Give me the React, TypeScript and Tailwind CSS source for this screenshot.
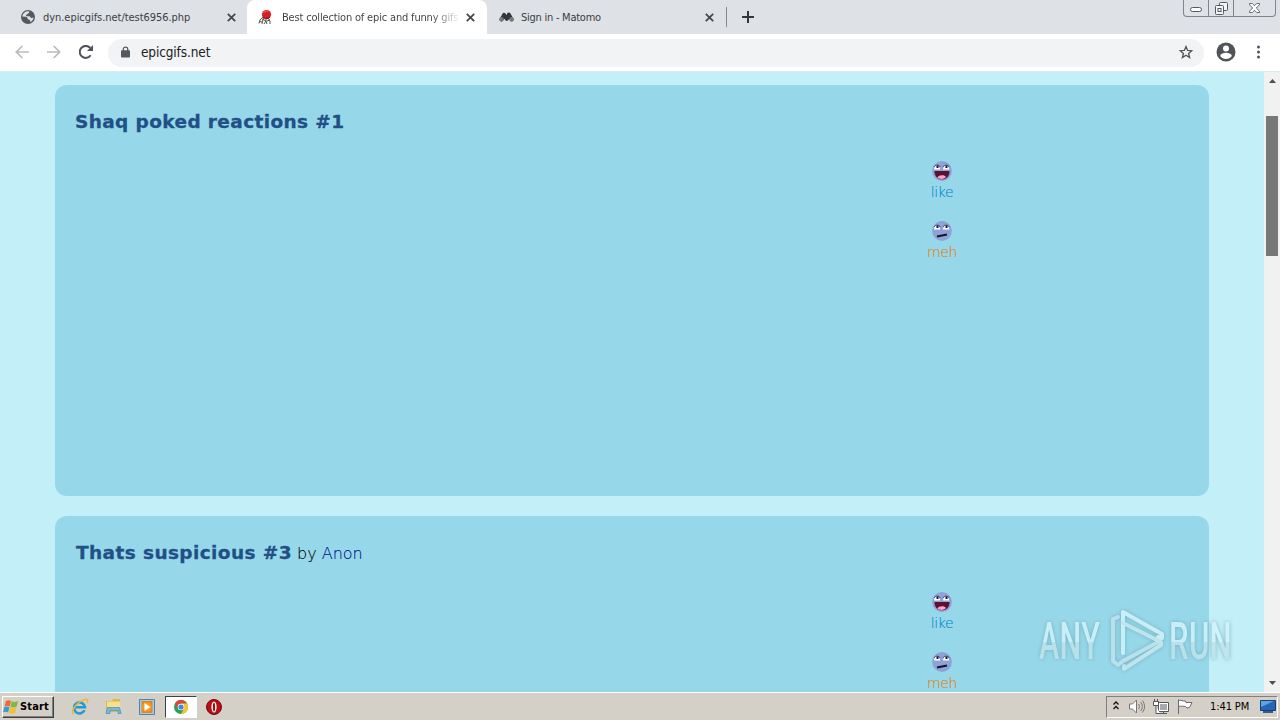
import React from "react";

const ui = "font-['DejaVu_Sans_Condensed','DejaVu_Sans',sans-serif]";

function Close() {
  return (
    <svg className="h-[9px] w-[9px] shrink-0" viewBox="0 0 9 9" stroke="#45494d" strokeWidth="1.8">
      <path d="M.8 .8 8.2 8.2M8.2 .8.8 8.2" />
    </svg>
  );
}

function Globe() {
  return (
    <svg className="h-[14px] w-[14px]" viewBox="0 0 14 14">
      <circle cx="7" cy="7" r="7" fill="#55595e" />
      <path d="M7.8 1.3c1 .7.4 1.7-.6 2-1 .4-.5 1.400-1.700 1.500-.8.2-.6 1.400.5 1.400h2.300c1.300.1 1 1.600 2.100 1.700.9.1 1.500-.3 2.200-.3-.2 2-1.500 3.700-3.200 4.500-.3-1-.1-1.800-1-2.300-1-.5-1.900-.4-2-1.700-.2-1.300-1.300-1.500-2.200-1.400L1.300 6.400C1.600 3.500 4.500.8 7.800 1.300z" fill="#dee1e6" />
    </svg>
  );
}

function GifFavicon() {
  return (
    <svg className="h-4 w-4" viewBox="0 0 16 16" fill="none">
      <path d="M5 8 2 11 1 14.500M6 9 4.500 12 4 15M8 10v2l1 3M10 9l2 3v3M4 10l4 2-2 3M1.500 12.500 4 13M9 12l3-1" stroke="#4f5a4c" strokeWidth="1" />
      <circle cx="8.500" cy="5.500" r="4.600" fill="#d81f26" />
      <path d="M5.500 4c1-2 3-2.300 4.500-1.500" stroke="#f26a6a" />
      <path d="M5 8c2 2 5 2 7 .2" stroke="#8b1218" />
    </svg>
  );
}

function MatomoIcon() {
  return (
    <svg className="h-[10px] w-[15px]" viewBox="0 0 15 10">
      <path d="M2.500 7.500 5 2.800 7.800 7 9.800 2.500l2.900 5" fill="none" stroke="#33373b" strokeWidth="3.800" strokeLinecap="round" strokeLinejoin="round" />
      <circle cx="2.500" cy="7.300" r="2.200" fill="#777b80" />
      <circle cx="12.500" cy="7.300" r="2.200" fill="#777b80" />
    </svg>
  );
}

function TabStrip() {
  return (
    <header className="flex h-[34px] bg-[#dee1e6] text-[11px] text-[#3c4043]">
      <div className="flex w-[247px] items-center rounded-br-lg pr-[11px] pl-[21px]">
        <Globe />
        <span className="mt-[2px] ml-2 w-[184px] whitespace-nowrap tracking-[-0.05px]">dyn.epicgifs.net/test6956.php</span>
        <Close />
      </div>
      <div className="flex w-[240px] items-center rounded-t-lg bg-white pl-[11px]">
        <GifFavicon />
        <span className="mt-[2px] ml-2 w-[176px] overflow-hidden whitespace-nowrap bg-gradient-to-r from-[#3c4043] from-85% to-[#3c4043]/10 bg-clip-text tracking-[-0.17px] text-transparent">Best collection of epic and funny gifs</span>
        <span className="ml-2 flex"><Close /></span>
      </div>
      <div className="flex w-[239px] items-center rounded-bl-lg pl-3">
        <MatomoIcon />
        <span className="mt-[2px] ml-[7px] w-[184px] whitespace-nowrap tracking-[-0.25px]">Sign in - Matomo</span>
        <Close />
      </div>
      <div className="mt-[7px] h-5 w-px bg-[#85898e]" />
      <svg className="mt-[11px] ml-[15px] h-3 w-3" viewBox="0 0 12 12" stroke="#33373b" strokeWidth="2">
        <path d="M0 6h12M6 0v12" />
      </svg>
      <div className="mr-[4px] ml-auto flex h-[17px] w-[93px] rounded-b border border-t-0 border-[#81858c]">
        <div className="flex w-[25px] items-center justify-center border-r border-[#81858c]">
          <span className="mt-[3px] h-[5px] w-3 rounded-sm border border-[#555961] bg-white" />
        </div>
        <div className="flex w-[25px] items-center justify-center border-r border-[#81858c]">
          <svg className="h-[13px] w-[13px]" viewBox="0 0 13 13" fill="#f4f5f7" stroke="#555961">
            <rect x="4.500" y=".5" width="8" height="8" rx="1" />
            <rect x=".5" y="3.500" width="8" height="9" rx="1" />
            <rect x="3" y="6.500" width="3" height="3" />
          </svg>
        </div>
        <div className="flex grow items-center justify-center">
          <svg className="h-[10px] w-[11px]" viewBox="0 0 12 11" fill="#fff" stroke="#555961">
            <path d="M.5.5h3L6 3 8.500.5h3v1.500L8 5.500l3.500 3.500v1.500h-3L6 8l-2.500 2.500h-3V9L4 5.500.5 2z" />
          </svg>
        </div>
      </div>
    </header>
  );
}

function Toolbar() {
  return (
    <div className="flex h-[38px] items-center border-b border-[#dcebee] bg-white">
      <svg className="mb-px ml-[15px] h-[14px] w-[14px]" viewBox="0 0 14 14" fill="none" stroke="#b8babd" strokeWidth="1.700">
        <path d="M14 7H1.500M7.300 1 1.300 7l6 6" />
      </svg>
      <svg className="mb-px ml-[18px] h-[14px] w-[14px]" viewBox="0 0 14 14" fill="none" stroke="#b8babd" strokeWidth="1.700">
        <path d="M0 7h12.500M6.700 1l6 6-6 6" />
      </svg>
      <svg className="mb-px ml-[18px] h-[14px] w-[14px]" viewBox="0 0 14 14">
        <path d="M11.700 10.300A6 6 0 1 1 11.300 3" fill="none" stroke="#505357" strokeWidth="2" />
        <path d="M14 0v6H8z" fill="#505357" />
      </svg>
      <div className="ml-[15px] flex h-7 w-[1096px] items-center rounded-full bg-[#f1f3f4] pr-[11px] pl-[13px]">
        <svg className="mb-[2px] h-3 w-[9px]" viewBox="0 0 10 12">
          <rect x="0" y="4" width="10" height="8" rx="1" fill="#55585c" />
          <path d="M2.500 5V3a2.500 2.300 0 0 1 5 0v2" fill="none" stroke="#55585c" strokeWidth="1.400" />
        </svg>
        <span className="ml-[11px] text-[13.500px] tracking-[-0.12px] text-[#202124]">epicgifs.net</span>
        <svg className="mb-px ml-auto h-[14px] w-[14px]" viewBox="0 0 14 14" fill="none" stroke="#505357" strokeWidth="1.300">
          <path d="m7 1.500 1.600 3.900 4.200.3-3.200 2.700 1 4.100L7 10.300l-3.600 2.200 1-4.100-3.200-2.700 4.200-.3z" />
        </svg>
      </div>
      <svg className="mb-[2px] ml-3 h-5 w-5" viewBox="0 0 20 20">
        <circle cx="10" cy="10" r="9.500" fill="#505357" />
        <circle cx="10" cy="6.500" r="3" fill="#fff" />
        <path d="M4.200 14c0-2.300 3.800-3.200 5.800-3.200s5.800.9 5.800 3.200c-1.200 1.800-3.300 3-5.800 3s-4.600-1.200-5.800-3z" fill="#fff" />
      </svg>
      <svg className="mb-px ml-[21px] h-[14px] w-[3px]" viewBox="0 0 3 14" fill="#505357">
        <circle cx="1.500" cy="2" r="1.500" />
        <circle cx="1.500" cy="7" r="1.500" />
        <circle cx="1.500" cy="12" r="1.500" />
      </svg>
    </div>
  );
}

function Face({ happy }: { happy: boolean }) {
  return (
    <svg className="h-5 w-5 shrink-0" viewBox="0 0 20 20">
      <circle cx="10" cy="10" r="9.900" fill="#8fa2d8" />
      {happy ? (
        <>
          <path d="M2.500 10h15c.3 5-3 8.300-7.500 8.300S2.200 15 2.500 10z" fill="#5b1230" />
          <path d="M5.500 16.500c1-2.500 7-3 8.500-.5-1.800 2.200-6.200 2.700-8.500.5z" fill="#f7a6c8" />
        </>
      ) : (
        <path d="m5 15.500 10-2" stroke="#12142c" strokeWidth="1.900" />
      )}
      <path d="M2 8.500c0-5 5-5.500 6.300 0zM11 8.500c.2-5.500 6-5 6.300 0z" fill="#fff" />
      <path d="M2 6c1.300-2.500 5-2.500 6.300 0M11 6c1.300-2.500 5-2.500 6.300 0" fill="none" stroke="#353b62" strokeWidth=".8" />
      <path d="M4.500 4.500h2v2.500h-2zM13.500 4.500h2v2.500h-2z" fill="#14172d" />
    </svg>
  );
}

function Votes() {
  return (
    <div className="ml-[842px] flex w-[50px] flex-col items-center gap-[21px] text-[14px] leading-[19px]">
      <div className="flex h-[39px] flex-col items-center text-[#0080cf]">
        <Face happy />
        <span className="mt-[2px] font-['DejaVu_Sans_Light','DejaVu_Sans',sans-serif] tracking-[-0.35px] [-webkit-text-stroke:0.1px]">like</span>
      </div>
      <div className="flex h-[39px] flex-col items-center text-[#e87900]">
        <Face happy={false} />
        <span className="mt-[2px] font-['DejaVu_Sans_Light','DejaVu_Sans',sans-serif] tracking-[-0.35px] [-webkit-text-stroke:0.1px]">meh</span>
      </div>
    </div>
  );
}

function Post({ title, author }: { title: string; author?: string }) {
  return (
    <article className="h-[411px] shrink-0 rounded-xl bg-[#96d8e9] px-5 pt-[23px]">
      <h2 className="h-[53px] whitespace-nowrap font-['DejaVu_Sans',sans-serif] leading-7">
        <span className={`text-[18.500px] font-bold text-[#224f85] [-webkit-text-stroke:0.3px] ${author ? "ml-px tracking-[0.4px]" : "tracking-[0.38px]"}`}>{title}</span>
        {author && (
          <span className="ml-[5px] font-['DejaVu_Sans_Light','DejaVu_Sans',sans-serif] text-[16px] text-black [-webkit-text-stroke:0.1px]">
            by <span className="text-[#00108a]">{author}</span>
          </span>
        )}
      </h2>
      <Votes />
    </article>
  );
}

function Scrollbar() {
  return (
    <div className="flex w-4 flex-col items-center bg-[#f1f1f1]">
      <svg className="mt-[7px] h-1 w-[7px]" viewBox="0 0 7 4"><path d="M0 4 3.500 0 7 4z" fill="#505050" /></svg>
      <div className="mt-[33px] h-[140px] w-3 bg-[#777]" />
      <svg className="mt-auto mb-[7px] h-1 w-[7px]" viewBox="0 0 7 4"><path d="M0 0h7L3.500 4z" fill="#505050" /></svg>
    </div>
  );
}

function Watermark() {
  return (
    <div className="absolute top-[608px] left-[1039px] flex h-[66px] w-[196px] items-center opacity-85 drop-shadow-[0_0_2px_#6fa9bb]">
      <div className="w-[64px]">
        <span className="mt-[2px] inline-block origin-left scale-x-[0.6] bg-gradient-to-b from-[#d3f3fb] from-50% to-[#c0e3ed] to-50% bg-clip-text font-['Roboto','Liberation_Sans',sans-serif] text-[51px] leading-[64px] font-medium tracking-[0.5px] text-transparent">ANY</span>
      </div>
      <svg className="ml-[6px] h-[64px] w-[56px] shrink-0" viewBox="0 0 56 64" fill="none" strokeWidth="4" strokeLinejoin="round" strokeLinecap="round">
        <path d="M9 8 4 10v42l5 4 5-4 37-20" stroke="#c0e3ed" />
        <path d="M14 44V3l39 22v4l-4-1" stroke="#d3f3fb" />
        <path d="M14 14 52 33v3L15 60v-3" stroke="#c6e7f0" />
      </svg>
      <div className="ml-[4px] w-[66px]">
        <span className="mt-[2px] inline-block origin-left scale-x-[0.61] bg-gradient-to-b from-[#d3f3fb] from-50% to-[#c0e3ed] to-50% bg-clip-text font-['Roboto','Liberation_Sans',sans-serif] text-[51px] leading-[64px] font-medium tracking-[0.5px] text-transparent">RUN</span>
      </div>
    </div>
  );
}

function StartFlag() {
  return (
    <svg className="h-4 w-4 shrink-0" viewBox="0 0 16 16">
      <path d="M3 2c2-1.300 3.500-1 5 0L6.700 7.500c-1.700-1-3.300-1.100-5.200 0z" fill="#ee6a35" />
      <path d="M8.700 2.300c2 1 3.800 1 6.500-.2l-1.500 5.500c-2 1.100-4.500 1.200-6.200.2z" fill="#80b840" />
      <path d="M1.300 8.200c2-1 3.500-1 5.200 0L5 13.500C3.500 12.600 2 12.500 0 13.600z" fill="#3998d5" />
      <path d="M7.200 8.500c1.800 1 3.600 1 6.300 0L12 14c-2 1-4.400.8-6.300-.1z" fill="#f4bf30" />
    </svg>
  );
}

function Taskbar() {
  return (
    <footer className="flex h-7 items-center border-t border-white bg-[#d4d0c8] text-[11px] text-black">
      <button className="ml-[2px] flex h-[22px] w-[52px] items-center border border-t-white border-r-[#404040] border-b-[#404040] border-l-white text-[11px] font-bold shadow-[inset_-1px_-1px_#808080]">
        <StartFlag />
        <span className="mt-px ml-px tracking-[0.150px]">Start</span>
      </button>
      <svg className="ml-[17px] h-[18px] w-[18px]" viewBox="0 0 18 18" fill="none">
        <path d="M13.500 12.300A5.500 5.500 0 1 1 14 9.300H4" stroke="#249ad2" strokeWidth="2.600" />
        <path d="M2.500 16.500C-1.800 13.500 7 3 14 1.500c3.500-.7 3 1.700 2 3.500" stroke="#e9b83b" strokeWidth="1.500" />
      </svg>
      <svg className="ml-4 h-[17px] w-[17px]" viewBox="0 0 17 17">
        <path d="M1 3h6l1-2h7v13H1z" fill="#d9b84f" />
        <path d="M2 3.500h13V13H2z" fill="#f8df88" />
        <path d="M2.500 9.500h12l1.500 6h-3v-3H5v3H1z" fill="#73b8df" stroke="#438fb8" strokeWidth=".7" />
      </svg>
      <svg className="ml-[17px] h-4 w-4" viewBox="0 0 16 16">
        <path d="M.5.5h15v15H.5z" fill="#a5cdea" stroke="#4a83b7" />
        <rect x="2.500" y="2" width="11" height="12" fill="#ea8412" />
        <circle cx="8" cy="8" r="4.800" fill="#f09a2c" />
        <path d="m5.500 4 6 4-6 4z" fill="#fff" />
      </svg>
      <div className="ml-[10px] flex h-[22px] w-8 items-center justify-center border border-t-[#404040] border-r-white border-b-white border-l-[#404040] bg-white">
        <svg className="h-[14px] w-[14px]" viewBox="0 0 14 14">
          <circle cx="7" cy="7" r="7" fill="#28a055" />
          <path d="M.9 3.500A7 7 0 0 1 13.100 3.500H7L4 8.500z" fill="#de4336" />
          <path d="M13.100 3.500A7 7 0 0 1 7 14l3-5.500-3-5z" fill="#f5c62e" />
          <circle cx="7" cy="7" r="3.300" fill="#fff" />
          <circle cx="7" cy="7" r="2.600" fill="#4285dc" />
        </svg>
      </div>
      <svg className="ml-[9px] h-4 w-4" viewBox="0 0 16 16">
        <circle cx="8" cy="8" r="7.500" fill="#b80e16" stroke="#74090d" />
        <ellipse cx="8" cy="8" rx="2.600" ry="5.500" fill="#fff" />
        <ellipse cx="8" cy="8" rx="1.100" ry="4.500" fill="#981017" />
      </svg>
      <div className="mr-[2px] ml-auto flex h-[22px] w-[172px] items-center border border-t-[#808080] border-r-white border-b-white border-l-[#808080]">
        <svg className="mb-[2px] ml-[6px] h-[9px] w-[6px]" viewBox="0 0 6 9" fill="none" stroke="#111" strokeWidth="1.300">
          <path d="m.5 3.500 2.500-2.500 2.500 2.500M.5 8 3 5.500 5.500 8" />
        </svg>
        <svg className="ml-[10px] h-[15px] w-4" viewBox="0 0 16 15" fill="none" stroke="#74777a">
          <path d="M.5 5h3l4-4v13l-4-4h-3z" fill="#fff" />
          <path d="M9.500 5c1.300 1.500 1.300 3.500 0 5M11.500 3c2.500 2.500 2.500 6.500 0 9M13.300 1.500c3 3.500 3 8.500 0 12" />
        </svg>
        <svg className="ml-2 h-4 w-4" viewBox="0 0 16 16" fill="#fff" stroke="#54585c">
          <path d="M5.500 3.500h10v9h-10zM7 14.500h7M10.500 12.500v2" />
          <path d="M7 5h7v6H7z" fill="#a5a9ad" stroke="none" />
          <path d="M.5 2.500h5v4h-5zM1.500 0v2.500M4.500 0v2.500M3 6.500v8h4" />
        </svg>
        <svg className="ml-2 h-[15px] w-4" viewBox="0 0 16 15" fill="#fff" stroke="#686c70">
          <path d="M1.500 15V.5M1.500 1.500c3-1 4 1 7 .5l.5 1.500h6l-2.500 5c-2 1-3.500 0-4-1-2 0-4-.7-7 0z" />
        </svg>
        <span className="mt-[2px] ml-[17px] w-[41px] whitespace-nowrap tracking-[-0.1px]">1:41 PM</span>
        <svg className="ml-[9px] h-[13px] w-4 shrink-0" viewBox="0 0 16 13">
          <path d="M.5.5h15v10H.5z" fill="#2864b5" stroke="#173f79" />
          <path d="M1 1h13L1 7z" fill="#5aa5e5" />
          <path d="M3 12h10" stroke="#385d88" strokeWidth="2" />
        </svg>
      </div>
    </footer>
  );
}

export default function App() {
  return (
    <div className={`relative flex h-[720px] w-[1280px] flex-col overflow-hidden ${ui}`}>
      <TabStrip />
      <Toolbar />
      <main className="flex h-[620px] overflow-hidden bg-[#c3eff8]">
        <div className="flex w-[1264px] flex-col gap-5 overflow-hidden pt-[13px] pr-[55px] pl-[55px]">
          <Post title="Shaq poked reactions #1" />
          <Post title="Thats suspicious #3" author="Anon" />
        </div>
        <Scrollbar />
      </main>
      <Taskbar />
      <Watermark />
    </div>
  );
}
